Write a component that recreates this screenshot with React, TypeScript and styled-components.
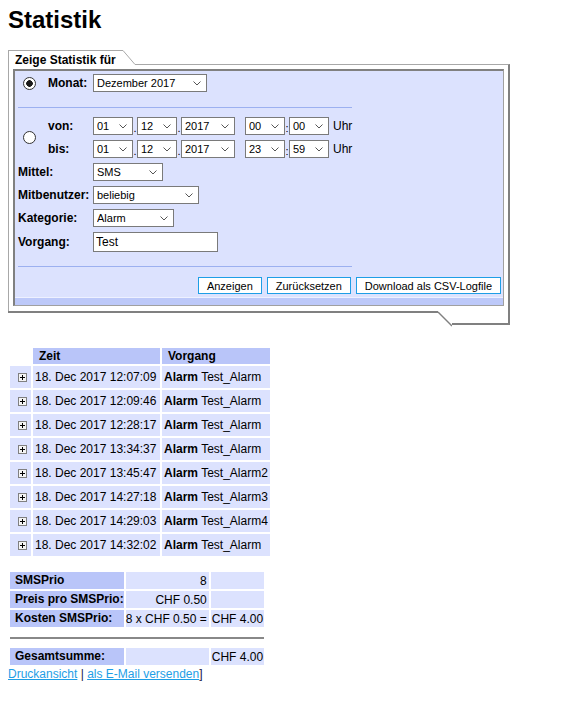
import React from "react";
import styled, { createGlobalStyle } from "styled-components";

const FONT = `"Liberation Sans", Arial, sans-serif`;
const PANEL = "#dce2fe";
const HEAD = "#b9c5f9";
const LIGHT = "#a8a8a8";
const DARK = "#808080";
const CYAN = "#1e9ee6";

const GlobalStyle = createGlobalStyle`
  html, body { margin: 0; padding: 0; background: #fff; }
  body { font-family: ${FONT}; font-size: 12px; color: #000; }
`;

const Page = styled.div`
  padding: 0 8px 8px 8px;
`;

const Title = styled.h1`
  margin: 6px 0 0;
  font-size: 24px;
  line-height: 28px;
  font-weight: bold;
`;

const Frame = styled.div`
  margin-top: 16px;
  width: 502px;
  display: flex;
  flex-direction: column;
`;

const TabRow = styled.div`
  display: flex;
  height: 19px;
`;

const Tab = styled.div`
  box-sizing: border-box;
  width: 115px;
  height: 19px;
  border-top: 1px solid ${LIGHT};
  border-left: 1px solid ${LIGHT};
  padding-left: 6px;
  font-weight: bold;
  font-size: 12px;
  line-height: 18px;
  white-space: nowrap;
`;

const Slant = styled.svg`
  display: block;
  flex: none;
`;

const TabRest = styled.div`
  flex: 1;
  box-sizing: border-box;
  margin-top: 14px;
  height: 5px;
  border-top: 1px solid ${LIGHT};
  border-right: 2px solid ${DARK};
`;

const FrameBody = styled.div`
  border-left: 1px solid ${LIGHT};
  border-right: 2px solid ${DARK};
  padding: 0 4px 5px 4px;
`;

const FrameFoot = styled.div`
  display: flex;
  align-items: flex-start;
`;

const FootLeft = styled.div`
  width: 430px;
  height: 0;
  border-top: 2px solid ${DARK};
`;

const FootRight = styled.div`
  flex: 1;
  height: 12px;
  border-right: 2px solid ${DARK};
  border-bottom: 2px solid ${DARK};
`;

const Panel = styled.div`
  background: ${PANEL};
  border-top: 2px solid ${DARK};
  border-left: 2px solid ${DARK};
  border-right: 1px solid #a0a0a0;
  border-bottom: 1px solid #a0a0a0;
  display: flex;
  flex-direction: column;
`;

const PanelContent = styled.div`
  padding: 3px 2px 0 3px;
`;

const Band = styled.div`
  margin-top: 3px;
  height: 7px;
  border-top: 1px solid #eef1ff;
  background: #bdc9f9;
`;

const Row = styled.div<{ $mt?: number }>`
  display: flex;
  align-items: center;
  height: 18px;
  margin-top: ${(p) => p.$mt ?? 0}px;
`;

const RadioCell = styled.div`
  width: 30px;
  flex: none;
  display: flex;
  align-items: center;
`;

const Radio = styled.input`
  appearance: none;
  -webkit-appearance: none;
  box-sizing: border-box;
  margin: 0 0 0 5px;
  width: 13px;
  height: 13px;
  border: 1px solid #333;
  border-radius: 50%;
  background: #fff;
  &:checked {
    background: radial-gradient(circle, #1a1a1a 0 3px, #fff 3.6px);
  }
`;

const Label = styled.div<{ $w: number }>`
  width: ${(p) => p.$w}px;
  flex: none;
  font-weight: bold;
  font-size: 12px;
  white-space: nowrap;
`;

const SelectWrap = styled.span<{ $w: number }>`
  display: inline-flex;
  align-items: center;
  box-sizing: border-box;
  flex: none;
  width: ${(p) => p.$w}px;
  height: 18px;
  border: 1px solid #7a7a7a;
  background: #fff;
`;

const NativeSelect = styled.select`
  appearance: none;
  -webkit-appearance: none;
  border: 0;
  background: transparent;
  font: 11px ${FONT};
  color: #000;
  padding: 0 0 0 3px;
  margin: 0;
  flex: 1;
  min-width: 0;
  height: 16px;
  outline: none;
`;

const Chevron = styled.svg`
  flex: none;
  margin: 1px 5px 0 0;
`;

const Sep = styled.span<{ $w?: number }>`
  width: ${(p) => p.$w ?? 4}px;
  flex: none;
  font-size: 11px;
  text-align: center;
  align-self: flex-end;
  line-height: 14px;
`;

const Uhr = styled.span`
  margin-left: 4px;
  font-size: 12px;
`;

const DateRows = styled.div`
  display: flex;
  flex-direction: column;
  gap: 5px;
`;

const Separator = styled.div<{ $mt: number }>`
  width: 334px;
  height: 1px;
  background: #9cb0f0;
  margin-top: ${(p) => p.$mt}px;
`;

const TextInput = styled.input`
  box-sizing: border-box;
  width: 125px;
  height: 20px;
  border: 1px solid #7a7a7a;
  background: #fff;
  font: 12px ${FONT};
  padding: 0 2px;
  margin: 0;
  outline: none;
`;

const ButtonRow = styled.div`
  display: flex;
  justify-content: flex-end;
  gap: 5px;
  margin-top: 10px;
`;

const Button = styled.button`
  box-sizing: border-box;
  height: 17px;
  border: 1px solid ${CYAN};
  background: #fff;
  font: 11px ${FONT};
  color: #000;
  padding: 0 8px;
  margin: 0;
  line-height: 14px;
`;

const Table = styled.table<{ $mt: number }>`
  border-collapse: separate;
  border-spacing: 2px;
  margin-top: ${(p) => p.$mt}px;
  font-size: 12px;
`;

const HeadCell = styled.th<{ $w: number }>`
  background: ${HEAD};
  font-weight: bold;
  text-align: left;
  padding: 0 0 0 6px;
  width: ${(p) => p.$w}px;
  height: 16px;
  line-height: 16px;
  white-space: nowrap;
`;

const BlankHead = styled.th`
  width: 21px;
  padding: 0;
`;

const IconCell = styled.td`
  background: ${PANEL};
  width: 13px;
  padding: 0 0 0 8px;
  height: 22px;
  vertical-align: middle;
`;

const DataCell = styled.td`
  background: ${PANEL};
  padding: 0 0 0 2px;
  height: 22px;
  white-space: nowrap;
`;

const SumLabel = styled.td`
  background: ${HEAD};
  font-weight: bold;
  padding: 0 0 0 5px;
  height: 17px;
  line-height: 17px;
  white-space: nowrap;
`;

const SumValue = styled.td<{ $w?: number }>`
  background: ${PANEL};
  text-align: right;
  padding: 0 2px 0 0;
  height: 17px;
  white-space: nowrap;
  ${(p) => (p.$w ? `width: ${p.$w}px;` : "")}
`;

const SumTotal = styled.td<{ $w?: number }>`
  background: ${PANEL};
  padding: 0 0 0 1px;
  height: 17px;
  white-space: nowrap;
  ${(p) => (p.$w ? `width: ${p.$w}px;` : "")}
`;

const RuleCell = styled.td`
  padding: 0;
  height: 17px;
  vertical-align: middle;
`;

const Rule = styled.div`
  height: 2px;
  background: #888;
`;

const LinkLine = styled.div`
  font-size: 12px;
  line-height: 14px;
  color: #20204a;
`;

const Link = styled.a`
  color: ${CYAN};
  text-decoration: underline;
`;

const PlusIcon = () => (
  <svg width="9" height="9" viewBox="0 0 9 9" style={{ display: "block" }}>
    <rect x="0.5" y="0.5" width="8" height="8" fill="#f4f4f4" stroke="#808080" />
    <path d="M2 4.5 H7 M4.5 2 V7" stroke="#000" strokeWidth="1" />
  </svg>
);

const Select = ({ w, value, options }: { w: number; value: string; options?: string[] }) => (
  <SelectWrap $w={w}>
    <NativeSelect defaultValue={value}>
      {(options ?? [value]).map((o) => (
        <option key={o}>{o}</option>
      ))}
    </NativeSelect>
    <Chevron width="8" height="5" viewBox="0 0 8 5">
      <path d="M0.5 0.5 L4 4 L7.5 0.5" fill="none" stroke="#555" strokeWidth="1" />
    </Chevron>
  </SelectWrap>
);

const DateRow = ({ label, d, m, y, h, mi }: { label: string; d: string; m: string; y: string; h: string; mi: string }) => (
  <Row>
    <Label $w={45}>{label}</Label>
    <Select w={40} value={d} />
    <Sep>.</Sep>
    <Select w={40} value={m} />
    <Sep>.</Sep>
    <Select w={54} value={y} />
    <Sep $w={10} />
    <Select w={40} value={h} />
    <Sep>:</Sep>
    <Select w={40} value={mi} />
    <Uhr>Uhr</Uhr>
  </Row>
);

const entries = [
  ["18. Dec 2017 12:07:09", "Test_Alarm"],
  ["18. Dec 2017 12:09:46", "Test_Alarm"],
  ["18. Dec 2017 12:28:17", "Test_Alarm"],
  ["18. Dec 2017 13:34:37", "Test_Alarm"],
  ["18. Dec 2017 13:45:47", "Test_Alarm2"],
  ["18. Dec 2017 14:27:18", "Test_Alarm3"],
  ["18. Dec 2017 14:29:03", "Test_Alarm4"],
  ["18. Dec 2017 14:32:02", "Test_Alarm"],
];

export default function App() {
  return (
    <Page>
      <GlobalStyle />
      <Title>Statistik</Title>
      <Frame>
        <TabRow>
          <Tab>Zeige Statistik für</Tab>
          <Slant width="12" height="15" viewBox="0 0 12 15">
            <path d="M0 0.5 L12 14.5" stroke={LIGHT} strokeWidth="1" />
          </Slant>
          <TabRest />
        </TabRow>
        <FrameBody>
          <Panel>
            <PanelContent>
              <Row>
                <RadioCell>
                  <Radio type="radio" name="mode" defaultChecked />
                </RadioCell>
                <Label $w={45}>Monat:</Label>
                <Select w={114} value="Dezember 2017" />
              </Row>
              <Separator $mt={15} />
              <Row $mt={9} style={{ height: "auto" }}>
                <RadioCell>
                  <Radio type="radio" name="mode" />
                </RadioCell>
                <DateRows>
                  <DateRow label="von:" d="01" m="12" y="2017" h="00" mi="00" />
                  <DateRow label="bis:" d="01" m="12" y="2017" h="23" mi="59" />
                </DateRows>
              </Row>
              <Row $mt={5}>
                <Label $w={75}>Mittel:</Label>
                <Select w={70} value="SMS" />
              </Row>
              <Row $mt={5}>
                <Label $w={75}>Mitbenutzer:</Label>
                <Select w={106} value="beliebig" />
              </Row>
              <Row $mt={5}>
                <Label $w={75}>Kategorie:</Label>
                <Select w={81} value="Alarm" />
              </Row>
              <Row $mt={5} style={{ height: 20 }}>
                <Label $w={75}>Vorgang:</Label>
                <TextInput defaultValue="Test" />
              </Row>
              <Separator $mt={14} />
              <ButtonRow>
                <Button>Anzeigen</Button>
                <Button>Zurücksetzen</Button>
                <Button>Download als CSV-Logfile</Button>
              </ButtonRow>
            </PanelContent>
            <Band />
          </Panel>
        </FrameBody>
        <FrameFoot>
          <FootLeft />
          <Slant width="14" height="16" viewBox="0 0 14 16">
            <path d="M0 1 L14 15" stroke={DARK} strokeWidth="1.5" />
          </Slant>
          <FootRight />
        </FrameFoot>
      </Frame>

      <Table $mt={19}>
        <thead>
          <tr>
            <BlankHead />
            <HeadCell $w={121}>Zeit</HeadCell>
            <HeadCell $w={102}>Vorgang</HeadCell>
          </tr>
        </thead>
        <tbody>
          {entries.map(([t, v], i) => (
            <tr key={i}>
              <IconCell>
                <PlusIcon />
              </IconCell>
              <DataCell>{t}</DataCell>
              <DataCell>
                <b>Alarm</b> {v}
              </DataCell>
            </tr>
          ))}
        </tbody>
      </Table>

      <Table $mt={12}>
        <tbody>
          <tr>
            <SumLabel>SMSPrio</SumLabel>
            <SumValue $w={81}>8</SumValue>
            <SumTotal $w={52} />
          </tr>
          <tr>
            <SumLabel>Preis pro SMSPrio:</SumLabel>
            <SumValue>CHF 0.50</SumValue>
            <SumTotal />
          </tr>
          <tr>
            <SumLabel>Kosten SMSPrio:</SumLabel>
            <SumValue>8 x CHF 0.50 =</SumValue>
            <SumTotal>CHF 4.00</SumTotal>
          </tr>
          <tr>
            <RuleCell colSpan={3}>
              <Rule />
            </RuleCell>
          </tr>
          <tr>
            <SumLabel>Gesamtsumme:</SumLabel>
            <SumValue />
            <SumTotal>CHF 4.00</SumTotal>
          </tr>
        </tbody>
      </Table>
      <LinkLine>
        <Link href="#">Druckansicht</Link> | <Link href="#">als E-Mail versenden</Link>]
      </LinkLine>
    </Page>
  );
}
